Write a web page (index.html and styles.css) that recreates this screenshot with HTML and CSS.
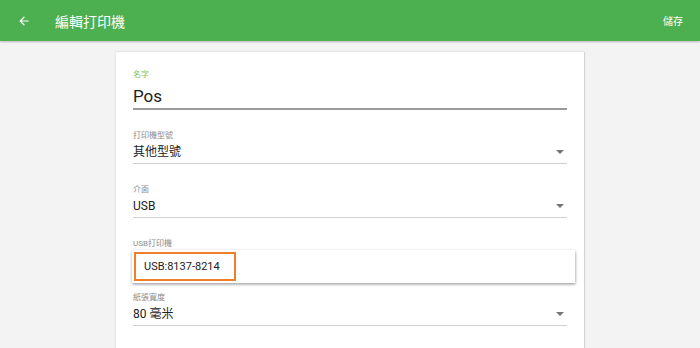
FILE: index.html
```html
<!DOCTYPE html>
<html lang="zh-Hant">
<head>
  <meta charset="UTF-8" />
  <meta name="viewport" content="width=device-width, initial-scale=1.0"/>
  <title>編輯打印機</title>
  <link rel="stylesheet" href="styles.css">
</head>
<body>

  <header class="topbar">
    <span class="back">
      <svg width="14" height="14" viewBox="0 0 24 24"><path d="M20 11H7.83l5.59-5.59L12 4l-8 8 8 8 1.41-1.41L7.83 13H20v-2z" fill="#fff"/></svg>
    </span>
    <h1 class="title">編輯打印機</h1>
    <span class="save">儲存</span>
  </header>

  <div class="card">
    <div class="field">
      <div class="label label-active">名字</div>
      <div class="value value-big">Pos</div>
    </div>

    <div class="field">
      <div class="label">打印機型號</div>
      <div class="value">其他型號 <span class="arrow"></span></div>
    </div>

    <div class="field">
      <div class="label">介面</div>
      <div class="value">USB <span class="arrow"></span></div>
    </div>

    <div class="field field-menu">
      <div class="label">USB打印機</div>
      <div class="value">&nbsp;</div>
      <div class="menu">
        <div class="menu-item">USB:8137-8214</div>
      </div>
    </div>

    <div class="field">
      <div class="label">紙張寬度</div>
      <div class="value">80 毫米 <span class="arrow"></span></div>
    </div>
  </div>

</body>
</html>
```

FILE: styles.css
```css
body {
  margin: 0;
  background-color: #f3f3f3;
  font-family: Roboto, "Noto Sans CJK TC", sans-serif;
  color: #212121;
  height: 348px;
  overflow: hidden;
}
.topbar {
  height: 41px;
  background-color: #4caf50;
  color: #fff;
  display: flex;
  align-items: center;
  padding: 0 17px 0 17px;
  box-shadow: 0 1px 2px rgba(0, 0, 0, 0.25);
  position: relative;
  z-index: 1;
}
.back {
  display: flex;
  width: 38px;
}
.title {
  margin: 0;
  font-size: 14px;
  font-weight: normal;
  flex: 1;
}
.save {
  font-size: 10px;
}
.card {
  width: 434px;
  height: 296px;
  margin: 11px auto 0;
  padding: 17px 17px 0;
  background-color: #fff;
  box-shadow: 0 0 2px rgba(0, 0, 0, 0.15), 1px 0 1px rgba(0, 0, 0, 0.08);
}
.field {
  margin-bottom: 20px;
}
.label {
  font-size: 8px;
  line-height: 12px;
  color: #8a8a8a;
}
.label-active {
  color: #8bc34a;
}
.value {
  font-size: 12px;
  line-height: 20px;
  padding-bottom: 1px;
  border-bottom: 1px solid #cfcfcf;
  display: flex;
  justify-content: space-between;
  align-items: center;
}
.value-big {
  font-size: 17px;
  line-height: 22px;
  padding-top: 4px;
  border-bottom: 2px solid #9a9a9a;
}
.arrow {
  width: 0;
  height: 0;
  border-left: 4px solid transparent;
  border-right: 4px solid transparent;
  border-top: 4px solid #757575;
  margin-right: 3px;
}
.field-menu {
  position: relative;
}
.menu {
  position: absolute;
  top: 12px;
  left: -1px;
  right: -8px;
  height: 33px;
  background-color: #fff;
  box-shadow: 0 1px 3px rgba(0, 0, 0, 0.3), 1px 2px 2px rgba(0, 0, 0, 0.12);
  display: flex;
  align-items: center;
  padding-left: 2px;
}
.menu-item {
  font-size: 11px;
  line-height: 25px;
  padding: 0 14px 0 8px;
  border: 2px solid #f07f2c;
}
```
